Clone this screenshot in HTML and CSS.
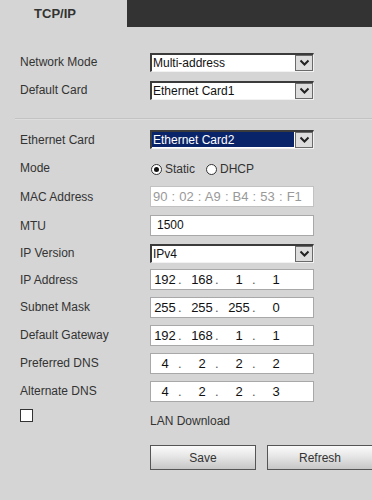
FILE: index.html
```html
<!DOCTYPE html>
<html>
<head>
<meta charset="utf-8">
<link rel="stylesheet" href="styles.css">
</head>
<body>
<div class="tabs">
  <div class="tab">TCP/IP</div>
  <div class="tab-fill"></div>
</div>
<div class="content">
  <div class="row r28">
    <div class="label">Network Mode</div>
    <div class="select"><span class="val">Multi-address</span><span class="arrow"><svg width="11" height="8" viewBox="0 0 11 8"><path d="M1.5 1.5 L5.5 5.5 L9.5 1.5" fill="none" stroke="#222" stroke-width="2"/></svg></span></div>
  </div>
  <div class="row r28">
    <div class="label">Default Card</div>
    <div class="select"><span class="val">Ethernet Card1</span><span class="arrow"><svg width="11" height="8" viewBox="0 0 11 8"><path d="M1.5 1.5 L5.5 5.5 L9.5 1.5" fill="none" stroke="#222" stroke-width="2"/></svg></span></div>
  </div>
  <div class="sep"></div>
  <div class="row r29">
    <div class="label">Ethernet Card</div>
    <div class="select"><span class="val hl">Ethernet Card2</span><span class="arrow"><svg width="11" height="8" viewBox="0 0 11 8"><path d="M1.5 1.5 L5.5 5.5 L9.5 1.5" fill="none" stroke="#222" stroke-width="2"/></svg></span></div>
  </div>
  <div class="row r28">
    <div class="label">Mode</div>
    <div class="radios">
      <span class="radio on"></span><span class="rtext">Static</span>
      <span class="radio"></span><span class="rtext">DHCP</span>
    </div>
  </div>
  <div class="row r29">
    <div class="label">MAC Address</div>
    <div class="input mac">90 : 02 : A9 : B4 : 53 : F1</div>
  </div>
  <div class="row r29">
    <div class="label">MTU</div>
    <div class="input mtu">1500</div>
  </div>
  <div class="row r26">
    <div class="label">IP Version</div>
    <div class="select"><span class="val">IPv4</span><span class="arrow"><svg width="11" height="8" viewBox="0 0 11 8"><path d="M1.5 1.5 L5.5 5.5 L9.5 1.5" fill="none" stroke="#222" stroke-width="2"/></svg></span></div>
  </div>
  <div class="row r27">
    <div class="label">IP Address</div>
    <div class="input ip"><span class="seg">192</span><span class="dot">.</span><span class="seg">168</span><span class="dot">.</span><span class="seg">1</span><span class="dot">.</span><span class="seg">1</span></div>
  </div>
  <div class="row r28">
    <div class="label">Subnet Mask</div>
    <div class="input ip"><span class="seg">255</span><span class="dot">.</span><span class="seg">255</span><span class="dot">.</span><span class="seg">255</span><span class="dot">.</span><span class="seg">0</span></div>
  </div>
  <div class="row r28">
    <div class="label">Default Gateway</div>
    <div class="input ip"><span class="seg">192</span><span class="dot">.</span><span class="seg">168</span><span class="dot">.</span><span class="seg">1</span><span class="dot">.</span><span class="seg">1</span></div>
  </div>
  <div class="row r28">
    <div class="label">Preferred DNS</div>
    <div class="input ip"><span class="seg">4</span><span class="dot">.</span><span class="seg">2</span><span class="dot">.</span><span class="seg">2</span><span class="dot">.</span><span class="seg">2</span></div>
  </div>
  <div class="row r28">
    <div class="label">Alternate DNS</div>
    <div class="input ip"><span class="seg">4</span><span class="dot">.</span><span class="seg">2</span><span class="dot">.</span><span class="seg">2</span><span class="dot">.</span><span class="seg">3</span></div>
  </div>
  <div class="check-row">
    <div class="check-cell"><span class="checkbox"></span></div>
    <div class="lan">LAN Download</div>
  </div>
  <div class="buttons">
    <button class="btn">Save</button>
    <button class="btn">Refresh</button>
  </div>
</div>
</body>
</html>
```
FILE: styles.css
```css
html, body {
  margin: 0;
  padding: 0;
}
body {
  background: #d5d5d5;
  font-family: "Liberation Sans", Arial, sans-serif;
  font-size: 12px;
  color: #333;
  width: 372px;
  height: 500px;
  overflow: hidden;
}
.tabs {
  display: flex;
  height: 27px;
  background: #333333;
}
.tab {
  width: 127px;
  background: #d5d5d5;
  font-weight: bold;
  font-size: 13px;
  line-height: 27px;
  text-align: center;
  color: #333;
  padding-right: 17px;
  box-sizing: border-box;
}
.tab-fill {
  flex: 1;
}
.content {
  padding-top: 21px;
}
.row {
  display: flex;
  align-items: center;
}
.r26 { height: 26px; }
.r27 { height: 27px; }
.r28 { height: 28px; }
.r29 { height: 29px; }
.label {
  width: 130px;
  padding-left: 20px;
  box-sizing: content-box;
  color: #333;
  font-size: 12px;
}
.sep {
  margin: 14px 0 5px 15px;
  height: 1px;
  background: #c3c3c3;
  border-bottom: 1px solid #dedede;
}
.select {
  width: 164px;
  height: 19px;
  box-sizing: border-box;
  border-top: 2px solid #3b3b3b;
  border-left: 2px solid #3b3b3b;
  border-right: 1px solid #f2f2f2;
  border-bottom: 1px solid #f2f2f2;
  background: #fff;
  display: flex;
  align-items: stretch;
}
.val {
  flex: 1;
  padding-left: 1px;
  font-size: 12px;
  line-height: 16px;
  color: #111;
}
.val.hl {
  background: #0a246a;
  color: #fff;
  margin: 0 1px 1px 0;
}
.arrow {
  width: 18px;
  box-sizing: border-box;
  border: 1px solid #6a6a6a;
  background: #dddddd;
  display: flex;
  align-items: center;
  justify-content: center;
}
.radios {
  display: flex;
  align-items: center;
  margin-top: 2px;
}
.radio {
  width: 11px;
  height: 11px;
  box-sizing: border-box;
  border: 1px solid #333;
  border-radius: 50%;
  background: #fff;
  margin-left: 1px;
  display: flex;
  align-items: center;
  justify-content: center;
}
.radio.on::after {
  content: "";
  width: 5px;
  height: 5px;
  border-radius: 50%;
  background: #111;
}
.rtext {
  margin-left: 3px;
  margin-right: 10px;
  font-size: 12px;
  color: #333;
}
.input {
  width: 164px;
  height: 21px;
  box-sizing: border-box;
  border: 1px solid #a8a8a8;
  background: #fff;
  font-size: 12px;
  line-height: 19px;
  color: #111;
  white-space: nowrap;
}
.input.mac {
  border-color: #c2c2c2;
  color: #999;
  font-size: 13px;
  padding-left: 2px;
  word-spacing: 0.5px;
}
.input.mtu {
  padding-left: 6px;
}
.input.ip {
  display: flex;
  padding-left: 1px;
  font-size: 13px;
}
.seg {
  width: 26px;
  text-align: center;
}
.dot {
  width: 11px;
  text-align: left;
  color: #555;
}
.check-row {
  display: flex;
  height: 40px;
}
.check-cell {
  width: 130px;
  padding-left: 20px;
  padding-top: 4px;
}
.checkbox {
  display: block;
  width: 13px;
  height: 13px;
  box-sizing: border-box;
  border: 1px solid #333;
  background: #fff;
}
.lan {
  padding-top: 9px;
  line-height: 14px;
  font-size: 12px;
  color: #333;
}
.buttons {
  display: flex;
  gap: 11px;
  padding-left: 150px;
}
.btn {
  width: 106px;
  height: 25px;
  flex: none;
  box-sizing: border-box;
  border: 1px solid #555;
  background: linear-gradient(#fbfbfb, #e6e6e6 45%, #c6c6c6);
  font-family: "Liberation Sans", Arial, sans-serif;
  font-size: 12px;
  color: #333;
  padding: 0;
}
```
